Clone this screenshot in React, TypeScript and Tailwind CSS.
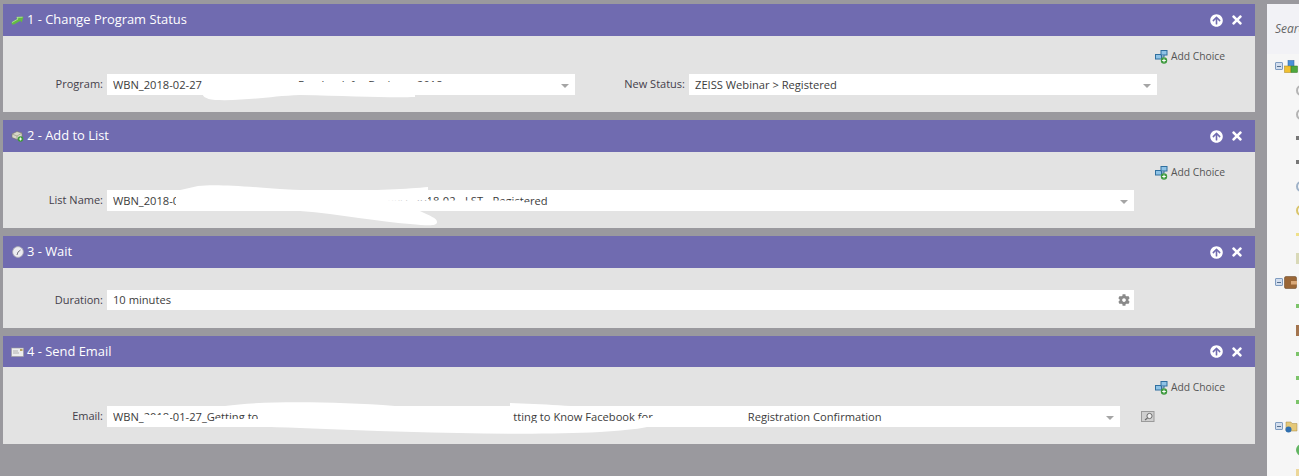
import React from "react";
import { FaArrowCircleUp, FaTimes, FaCog } from "react-icons/fa";

const ArrowIcon = () => (
  <svg width="13" height="9" viewBox="0 0 13 9">
    <path d="M0.5 6.5 L6.5 2.8 L5.2 1 L12.5 0.8 L10.8 6.5 L9.4 4.8 L3 8.6 L1 8.4 Z" fill="#63bb42" />
    <path d="M1 6.5 L7 3 L6 1.4 L11.5 1.2" fill="none" stroke="#b9eaa0" strokeWidth="0.8" />
  </svg>
);
const ListIcon = () => (
  <svg width="13" height="12" viewBox="0 0 13 12">
    <path d="M1 4 L6 1.5 L11 3 L11 7 L6 9.5 L1 7.5 Z" fill="#d8d8c8" stroke="#77776a" strokeWidth="0.6" />
    <path d="M1 4 L6 6 L11 3 M6 6 L6 9.5" fill="none" stroke="#8d8d7c" strokeWidth="0.6" />
    <circle cx="9.5" cy="9" r="2.8" fill="#3f9a3a" />
    <path d="M8 9 H11 M9.5 7.5 V10.5" stroke="#fff" strokeWidth="0.9" />
  </svg>
);
const ClockIcon = () => (
  <svg width="12" height="12" viewBox="0 0 12 12">
    <circle cx="6" cy="6" r="5.4" fill="#ececf0" stroke="#a9a9b2" strokeWidth="0.8" />
    <path d="M6 6 L8.5 4 M6 6 L5 9" stroke="#6a6a72" strokeWidth="0.9" />
  </svg>
);
const MailIcon = () => (
  <svg width="13" height="10" viewBox="0 0 13 10">
    <rect x="0.5" y="1" width="12" height="8.5" fill="#ededed" stroke="#9a9a9a" strokeWidth="0.6" />
    <rect x="9" y="2" width="2.5" height="2" fill="#b9a35f" />
    <path d="M2 4 H7 M2 6 H8" stroke="#9a9a9a" strokeWidth="0.7" />
  </svg>
);
const ChoiceIcon = () => (
  <svg width="13" height="14" viewBox="0 0 13 14">
    <rect x="0.5" y="4.5" width="6" height="4.5" fill="#8fc3e6" stroke="#2f6f9f" />
    <rect x="6" y="0.5" width="6" height="4.5" fill="#8fc3e6" stroke="#2f6f9f" />
    <path d="M6 7 H9 V5" fill="none" stroke="#2f6f9f" />
    <circle cx="9" cy="10.5" r="3.2" fill="#3e9a3e" />
    <path d="M7.2 10.5 H10.8 M9 8.7 V12.3" stroke="#fff" strokeWidth="1" />
  </svg>
);
const PickerIcon = () => (
  <svg width="14" height="11" viewBox="0 0 14 11">
    <rect x="0.5" y="0.5" width="12.5" height="10" fill="#cfcfcf" stroke="#9a9a9a" />
    <circle cx="8.5" cy="5" r="2.6" fill="#f1f1f1" stroke="#6c6c6c" />
    <path d="M6.5 7 L4 9" stroke="#6c6c6c" strokeWidth="1.2" />
  </svg>
);

const Caret = () => <div className="w-0 h-0 border-l-[4px] border-r-[4px] border-t-[4px] border-l-transparent border-r-transparent border-t-[#a5a5a5]" />;

function Field({ width, children, right }: { width: string; children: React.ReactNode; right?: React.ReactNode }) {
  return (
    <div className={`${width} h-[21px] bg-white flex items-center pl-[6px] pr-[6px] pt-[2px] text-[11.15px] text-[#3c3c3c] whitespace-nowrap`}>
      <div className="flex-1 flex items-center overflow-hidden">{children}</div>
      {right ?? <Caret />}
    </div>
  );
}

function Label({ width, children }: { width: string; children: React.ReactNode }) {
  return <div className={`${width} text-right pr-[4px] text-[11px] text-[#44404a]`}>{children}</div>;
}

function AddChoice({ mb = "mb-[9px]" }: { mb?: string }) {
  return (
    <div className={`h-4 ${mb} flex items-center justify-end pr-[30px] gap-[3px] text-[10.3px] text-[#555]`}>
      <ChoiceIcon />
      <span>Add Choice</span>
    </div>
  );
}

function Card({ icon, title, children, scribble, viewBox, h, head = "h-8" }: { icon: React.ReactNode; title: string; children: React.ReactNode; scribble?: string; viewBox?: string; h: string; head?: string }) {
  return (
    <div className={`relative ${h} flex flex-col`}>
      <div className={`${head} bg-[#706bb0] flex items-center pl-2 pr-[11px] text-white text-[12.9px]`}>
        <div className="w-[13px] flex justify-center mr-[3px]">{icon}</div>
        <span className="flex-1">{title}</span>
        <FaArrowCircleUp className="w-[13px] h-[13px] mr-[7px]" />
        <FaTimes className="w-[14px] h-[14px]" />
      </div>
      <div className="flex-1 bg-[#e3e3e3]">{children}</div>
      {scribble && (
        <svg className="absolute left-0 top-0 w-full h-full pointer-events-none overflow-visible" viewBox={viewBox} preserveAspectRatio="none">
          <path d={scribble} fill="#ffffff" />
        </svg>
      )}
    </div>
  );
}

const tree: { kind: "group" | "item"; cls?: string; icon?: React.ReactNode }[] = [
  { kind: "group", icon: (
    <svg width="14" height="13" viewBox="0 0 14 13"><rect x="4" y="0.5" width="6" height="6" fill="#4a90d9" stroke="#2a6099" strokeWidth="0.5" /><rect x="0.5" y="6" width="6.5" height="6.5" fill="#f0c030" stroke="#a8841c" strokeWidth="0.5" /><rect x="7" y="6" width="6.5" height="6.5" fill="#4ea83c" stroke="#2f7423" strokeWidth="0.5" /></svg>
  ) },
  { kind: "item", cls: "border-2 border-[#b4b4b4] rounded-full h-[11px]" },
  { kind: "item", cls: "border-2 border-[#b4b4b4] rounded-full h-[11px]" },
  { kind: "item", cls: "bg-[#777] h-[4px]" },
  { kind: "item", cls: "bg-[#777] h-[4px]" },
  { kind: "item", cls: "border-2 border-[#9fb2c8] rounded-full h-[11px]" },
  { kind: "item", cls: "border-2 border-[#d9c46a] rounded-full h-[11px]" },
  { kind: "item", cls: "bg-[#efe08a] h-[3px]" },
  { kind: "item", cls: "bg-[#d9d9b8] h-[11px]" },
  { kind: "group", icon: (
    <svg width="14" height="13" viewBox="0 0 14 13"><rect x="0.5" y="0.5" width="12" height="12" rx="1.5" fill="#9a6636" stroke="#5f3c1c" strokeWidth="0.5" /><rect x="7" y="5" width="6" height="3.5" fill="#d9a878" /></svg>
  ) },
  { kind: "item", cls: "bg-[#7cc46a] h-[4px]" },
  { kind: "item", cls: "bg-[#a3744e] h-[11px]" },
  { kind: "item", cls: "bg-[#7cc46a] h-[4px]" },
  { kind: "item", cls: "bg-[#7cc46a] h-[4px]" },
  { kind: "item", cls: "bg-[#7cc46a] h-[4px]" },
  { kind: "group", icon: (
    <svg width="14" height="13" viewBox="0 0 14 13"><path d="M2 2 H7 L8 3.5 H13 V11 H2 Z" fill="#e5c878" stroke="#a68b45" strokeWidth="0.5" /><circle cx="4.5" cy="9.5" r="3" fill="#2f6fb0" /></svg>
  ) },
  { kind: "item", cls: "bg-[#62b562] rounded-full h-[12px]" },
  { kind: "item", cls: "bg-[#ecd79a] h-[11px]" },
];

export default function App() {
  return (
    <div className="w-[1299px] h-[476px] overflow-hidden bg-[#9a999e] flex pt-1 pl-[3px] font-['Open_Sans',sans-serif]">
      <div className="w-[1252px] shrink-0 flex flex-col gap-2">
        <Card
          h="h-[108px]"
          icon={<ArrowIcon />}
          title="1 - Change Program Status"
          viewBox="3 4 1252 108"
          scribble="M202 76 L296 76 L296 82 L445 82 L445 92 L415 92 L415 97 C390 98 350 96 300 95 C270 96 250 101 215 100 C205 99 202 96 202 92 Z"
        >
          <div className="pt-[13px]">
            <AddChoice />
            <div className="flex items-center">
              <Label width="w-[104px]">Program:</Label>
              <Field width="w-[468px]">
                <span>WBN_2018-02-27</span>
                <span className="ml-[96px]">Facebook for Business 2018</span>
              </Field>
              <Label width="w-[114px]">New Status:</Label>
              <Field width="w-[468px]">ZEISS Webinar &gt; Registered</Field>
            </div>
          </div>
        </Card>

        <Card
          h="h-[108px]"
          icon={<ListIcon />}
          title="2 - Add to List"
          viewBox="3 120 1252 108"
          scribble="M176 191 L198 186 C215 184 240 186 280 189 C330 192 400 190 428 187 L428 200 L385 200.5 L520 200.5 L532 205 L530 211 L420 211 C430 216 437 218 437 222 C437 226 430 226 410 224 C380 222 340 214 300 211 L176 211 Z"
        >
          <div className="pt-[13px]">
            <AddChoice />
            <div className="flex items-center">
              <Label width="w-[104px]">List Name:</Label>
              <Field width="w-[1027px]">
                <span>WBN_2018-0</span>
                <span className="ml-[208px]">ness 2018-02 - LST - Registered</span>
              </Field>
            </div>
          </div>
        </Card>

        <Card h="h-[92px]" icon={<ClockIcon />} title="3 - Wait">
          <div className="pt-[22px]">
            <div className="flex items-center">
              <Label width="w-[104px]">Duration:</Label>
              <div className="w-[1027px] h-5 bg-white flex items-center justify-between pl-[6px] pr-[4px] text-[11.15px] text-[#3c3c3c]">
                <span>10 minutes</span>
                <FaCog className="w-3 h-3 text-[#8a8a8a]" />
              </div>
            </div>
          </div>
        </Card>

        <Card
          h="h-[108px]"
          head="h-[31px]"
          icon={<MailIcon />}
          title="4 - Send Email"
          viewBox="3 336 1252 108"
          scribble="M140 415 H170 V422 H140 Z M215 419 H258 V411 L225 406 C260 401 330 401 395 406 L510 406 L510 403 C540 404 580 406 600 409 L600 411 L508 411 L508 423 L636 423 L640 418 L662 418 L660 423 C650 428 630 430 600 432 C520 436 400 432 300 428 C270 427 240 426 215 424 Z"
        >
          <div className="pt-[13px]">
            <AddChoice mb="mb-[10px]" />
            <div className="flex items-center">
              <Label width="w-[104px]">Email:</Label>
              <Field width="w-[1013px]">
                <span>WBN_2018-01-27_Getting to</span>
                <span className="ml-[255px]">tting to Know Facebook for</span>
                <span className="ml-[95px]">Registration Confirmation</span>
              </Field>
              <div className="ml-[21px]">
                <PickerIcon />
              </div>
            </div>
          </div>
        </Card>
      </div>

      <div className="ml-3 w-[60px] shrink-0 h-[472px] bg-[#f6f6f6] flex flex-col">
        <div className="h-[50px] shrink-0 bg-[#f2f2f6] pl-2 pt-[16px] text-[12px] italic text-[#666] whitespace-nowrap">Search</div>
        <div className="flex flex-col">
          {tree.map((row, i) => (
            <div key={i} className="h-6 shrink-0 flex items-center">
              {row.kind === "group" ? (
                <div className="flex items-center pl-2">
                  <div className="w-[8px] h-[8px] border border-[#7f9cc0] bg-[#d3deee] rounded-[1px] flex items-center justify-center mr-px">
                    <div className="w-[4px] h-px bg-[#56708f]" />
                  </div>
                  {row.icon}
                </div>
              ) : (
                <div className={`ml-[29px] w-[12px] ${row.cls}`} />
              )}
            </div>
          ))}
        </div>
      </div>
    </div>
  );
}
